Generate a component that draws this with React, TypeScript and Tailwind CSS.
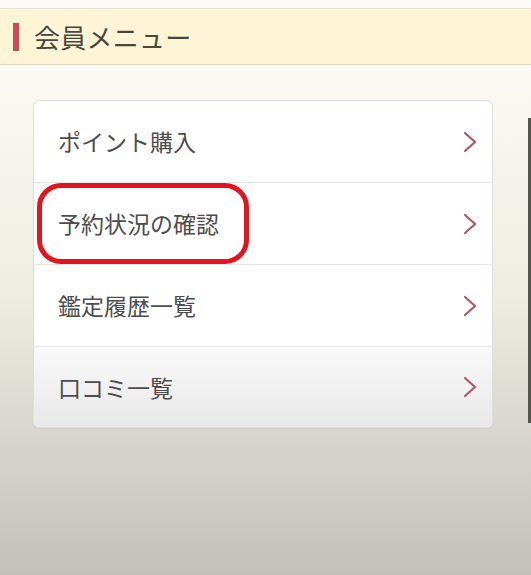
import React from "react";

const ITEMS = ["ポイント購入", "予約状況の確認", "鑑定履歴一覧", "口コミ一覧"];

function Chevron() {
  return (
    <svg width="16" height="24" viewBox="0 0 16 24" fill="none">
      <path d="M3 3 L13 12 L3 21" stroke="#b4566b" strokeWidth="2.2" strokeLinecap="round" strokeLinejoin="round" />
    </svg>
  );
}

export default function App() {
  return (
    <div
      className="relative w-[531px] h-[575px] overflow-hidden bg-gradient-to-b from-[#fefdf8] via-[#efeee4] to-[#c1c0ba]"
      style={{ fontFamily: '"Noto Sans CJK JP", "Noto Sans", sans-serif' }}
    >
      {/* top strip */}
      <div className="h-[9px] bg-[#fcfcf7] border-b border-[#e6e2d2]" />

      {/* header */}
      <div className="h-[56px] flex items-center bg-[#fdf5d6] border-b border-[#dcd7c2]">
        <div className="ml-[13px] w-[6px] h-[28px] bg-[#cc4b58]" />
        <h1 className="ml-[15px] text-[26px] leading-none text-[#48473a] tracking-[0.01em]">会員メニュー</h1>
      </div>

      {/* menu card */}
      <div className="ml-[33px] mt-[35px] w-[460px] rounded-[6px] border border-[#e0ded8] bg-white overflow-hidden shadow-[0_1px_1px_rgba(0,0,0,0.04)]">
        {ITEMS.map((label, i) => (
          <div
            key={label}
            className={
              i === ITEMS.length - 1
                ? "h-[80px] flex items-center justify-between pl-[24px] pr-[14px] bg-gradient-to-b from-[#f9f9f9] to-[#e8e8e8]"
                : "h-[82px] flex items-center justify-between pl-[24px] pr-[14px] border-b border-[#e6e6e3]"
            }
          >
            <span className="text-[23px] text-[#4d4d4d]">{label}</span>
            <Chevron />
          </div>
        ))}
      </div>

      {/* annotation */}
      <div className="absolute left-[37px] top-[183px] w-[212px] h-[81px] rounded-[24px] border-[5px] border-[#e3141d]" />

      {/* scrollbar */}
      <div className="absolute left-[528px] top-[118px] w-[3px] h-[305px] bg-[#55554f]" />
    </div>
  );
}
